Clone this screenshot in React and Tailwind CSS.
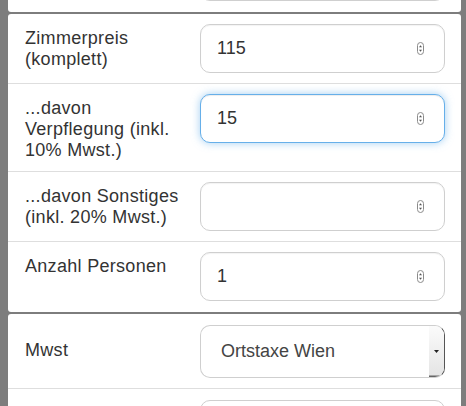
import React from 'react';

function Spinner() {
  return (
    <svg width="7" height="13" viewBox="0 0 7 13" className="flex-none">
      <rect x="0.5" y="0.5" width="6" height="12" rx="3" fill="#fff" stroke="#8a8a8a" />
      <path d="M3.5 3.2 L5 5.3 H2 Z" fill="#555" />
      <path d="M3.5 9.8 L5 7.7 H2 Z" fill="#555" />
    </svg>
  );
}

function NumberInput({ value, focused }) {
  return (
    <div
      className={
        'flex h-[49px] w-[245px] flex-none items-center justify-between rounded-[10px] border bg-white pl-[16px] pr-[20px] text-[18px] text-[#333] ' +
        (focused
          ? 'border-[#66afe9] shadow-[0_0_8px_rgba(102,175,233,0.6),inset_0_1px_1px_rgba(0,0,0,0.075)]'
          : 'border-[#cfcfcf] shadow-[inset_0_1px_1px_rgba(0,0,0,0.05)]')
      }
    >
      <span>{value}</span>
      <Spinner />
    </div>
  );
}

function Row({ label, children, last }) {
  return (
    <div className={'flex items-start py-[10px] pl-[17px] ' + (last ? '' : 'border-b border-[#dedede]')}>
      <div className="w-[175px] flex-none pr-[12px] pt-[4px] text-[18px] leading-[21px] tracking-[0.3px] text-[#333]">
        {label}
      </div>
      {children}
    </div>
  );
}

export default function App() {
  return (
    <div className="flex h-[406px] w-[466px] flex-col gap-[1.5px] overflow-hidden bg-[#7d7d7d] pl-[8px] pr-[5px] font-['Liberation_Sans',Arial,sans-serif]">
      {/* previous card, only its bottom edge shows */}
      <div className="h-[12px] flex-none overflow-hidden rounded-b-[3px] bg-white pl-[192px]">
        <div className="-mt-[48px] h-[49px] w-[245px] rounded-[10px] border border-[#cfcfcf]" />
      </div>

      <div className="flex-none rounded-[3px] bg-white pb-[1px]">
        <Row label={<>Zimmerpreis<br />(komplett)</>}>
          <NumberInput value="115" />
        </Row>
        <Row label="...davon Verpflegung (inkl. 10% Mwst.)">
          <NumberInput value="15" focused />
        </Row>
        <Row label="...davon Sonstiges (inkl. 20% Mwst.)">
          <NumberInput value="" />
        </Row>
        <Row label="Anzahl Personen" last>
          <NumberInput value="1" />
        </Row>
      </div>

      <div className="mt-[1px] flex-1 rounded-t-[3px] bg-white">
        <div className="flex items-center border-b border-[#dedede] pb-[10px] pl-[17px] pt-[11px]">
          <div className="w-[175px] flex-none pb-[2px] text-[18px] tracking-[0.3px] text-[#333]">Mwst</div>
          <div className="flex h-[53px] w-[245px] flex-none overflow-hidden rounded-[10px] border border-[#cfcfcf] border-r-[#555] border-r-[1.5px]">
            <div className="flex flex-1 items-center pl-[20px] text-[18px] text-[#444]">Ortstaxe Wien</div>
            <div className="flex w-[15px] flex-none items-center justify-center bg-gradient-to-b from-[#fbfbfb] to-[#e4e4e4] shadow-[inset_0_-1.5px_0_#666]">
              <svg width="5" height="3" viewBox="0 0 5 3">
                <path d="M0 0 H5 L2.5 3 Z" fill="#222" />
              </svg>
            </div>
          </div>
        </div>
        <div className="flex pl-[17px] pt-[11px]">
          <div className="w-[175px] flex-none" />
          <div className="h-[49px] w-[245px] flex-none rounded-[10px] border border-[#cfcfcf]" />
        </div>
      </div>
    </div>
  );
}
